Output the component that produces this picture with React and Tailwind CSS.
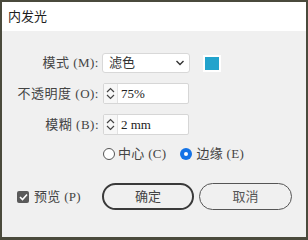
const font = { fontFamily: '"Liberation Serif", "Noto Sans CJK SC", serif' };

const Stepper = () => (
  <div className="flex flex-col items-center justify-center w-[14px] h-full border-r border-[#e2e2e2] bg-[#f7f7f7]">
    <svg width="9" height="6" viewBox="0 0 9 6" className="mb-[1px]">
      <path d="M1 5 L4.5 1.5 L8 5" fill="none" stroke="#444" strokeWidth="1.2" />
    </svg>
    <svg width="9" height="6" viewBox="0 0 9 6">
      <path d="M1 1 L4.5 4.5 L8 1" fill="none" stroke="#444" strokeWidth="1.2" />
    </svg>
  </div>
);

const Label = ({ children }) => (
  <div className="w-[98px] text-right pr-[1px] text-[13px] tracking-[0.5px] text-[#444] whitespace-nowrap">{children}</div>
);

const NumberField = ({ value }) => (
  <div className="ml-[3px] flex items-center w-[86px] h-full bg-white border border-[#d6d6d6] rounded-[2px]">
    <Stepper />
    <span className="pl-[3px] text-[13px] text-[#222]">{value}</span>
  </div>
);

export default function App() {
  return (
    <div className="w-[308px] h-[240px] bg-[#4a4a3c] pt-[2px] pl-[2px]" style={font}>
      <div className="w-[304px] h-[235px] flex flex-col bg-[#f0f0f0]">
        <div className="h-[29px] bg-white flex items-center pl-[6px] text-[13px] text-[#1e1e1e]">
          内发光
        </div>

        <div className="flex flex-col pt-[22px]">
          <div className="flex items-center h-[20px]">
            <Label>模式 (M):</Label>
            <div className="ml-[2px] flex items-center justify-between w-[88px] h-full bg-white border border-[#d8d8d8] rounded-[3px] pl-[6px] pr-[4px]">
              <span className="text-[13px] text-[#333]">滤色</span>
              <svg width="10" height="6" viewBox="0 0 10 6">
                <path d="M1.5 1 L5 4.5 L8.5 1" fill="none" stroke="#333" strokeWidth="1.4" />
              </svg>
            </div>
            <div className="ml-[13px] w-[18px] h-[17px] bg-white p-[2px]">
              <div className="w-full h-full bg-[#22a3cc]" />
            </div>
          </div>

          <div className="flex items-center h-[21px] mt-[10px]">
            <Label>不透明度 (O):</Label>
            <NumberField value="75%" />
          </div>

          <div className="flex items-center h-[21px] mt-[10px]">
            <Label>模糊 (B):</Label>
            <NumberField value="2 mm" />
          </div>

          <div className="flex items-center h-[20px] mt-[9px] pl-[101px] text-[13px] tracking-[0.3px] text-[#444]">
            <div className="w-[12px] h-[12px] rounded-full border border-[#555] bg-white" />
            <span className="ml-[3px]">中心 (C)</span>
            <div className="ml-[14px] w-[12px] h-[12px] rounded-full bg-[#1473e6] flex items-center justify-center">
              <div className="w-[4px] h-[4px] rounded-full bg-white" />
            </div>
            <span className="ml-[4px]">边缘 (E)</span>
          </div>

          <div className="flex items-center h-[27px] mt-[19px] pl-[15px]">
            <div className="w-[12px] h-[12px] rounded-[2px] bg-[#5a5a5a] flex items-center justify-center">
              <svg width="9" height="8" viewBox="0 0 9 8">
                <path d="M1 4 L3.5 6.5 L8 1.5" fill="none" stroke="#fff" strokeWidth="1.6" />
              </svg>
            </div>
            <span className="ml-[5px] text-[13px] tracking-[0.3px] text-[#444]">预览 (P)</span>
            <button className="ml-[21px] w-[92px] h-[27px] rounded-full border-2 border-[#3a3a3a] text-[13px] text-[#444] bg-[#f0f0f0]">
              确定
            </button>
            <button className="ml-[5px] w-[93px] h-[27px] rounded-full border-[1.5px] border-[#555] text-[13px] text-[#555] bg-[#f0f0f0]">
              取消
            </button>
          </div>
        </div>
      </div>
    </div>
  );
}
